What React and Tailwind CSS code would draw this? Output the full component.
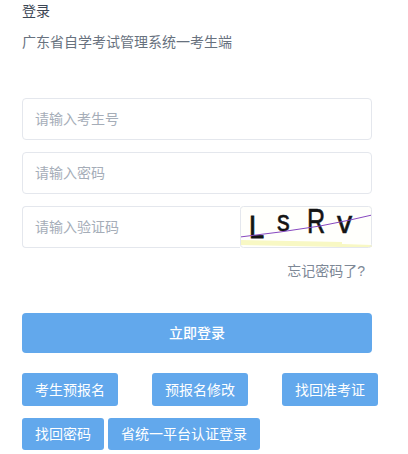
const font = { fontFamily: '"Liberation Sans", "Noto Sans CJK SC", sans-serif' };

function Field({ placeholder, className = "" }) {
  return (
    <div className={`h-[42px] border border-[#e4e7ed] flex items-center pl-3 text-sm text-[#a5adb8] ${className}`}>
      {placeholder}
    </div>
  );
}

function Small({ children, className = "" }) {
  return (
    <div className={`bg-[#62a8ec] text-white text-sm rounded-[3px] flex items-center justify-center ${className}`}>
      {children}
    </div>
  );
}

function Letter({ x, y, size, sx, sw = 0.5, children }) {
  return (
    <text transform={`translate(${x} ${y}) scale(${sx} 1)`} fontSize={size} fill="#141414" stroke="#141414" strokeWidth={sw} style={font}>
      {children}
    </text>
  );
}

export default function App() {
  return (
    <div className="w-[408px] h-[454px] bg-white overflow-hidden pl-[22px] font-['Liberation_Sans','Noto_Sans_CJK_SC',sans-serif]">
      <div className="h-[22px] text-sm leading-[22px] text-[#3c4654]">登录</div>
      <div className="mt-[9px] h-[22px] text-sm leading-[22px] text-[#67717e]">广东省自学考试管理系统一考生端</div>

      <div className="w-[350px] mt-[45px] flex flex-col gap-3">
        <Field placeholder="请输入考生号" className="rounded" />
        <Field placeholder="请输入密码" className="rounded" />
        <div className="flex h-[42px]">
          <Field placeholder="请输入验证码" className="w-[218px] rounded-l border-r-0" />
          <svg width="132" height="42" viewBox="0 0 132 42" className="block overflow-visible">
            <rect width="132" height="42" fill="#fffffc" />
            <path d="M0 34 L102 36 L102 38 L132 39 V41 L102 41 L0 39 Z" fill="#f8f8c4" />
            <Letter x={9} y={32} size={32} sx={0.85} sw={0.9}>L</Letter>
            <Letter x={37} y={25} size={30} sx={0.85} sw={0.6}>s</Letter>
            <Letter x={67} y={27} size={35} sx={0.72} sw={0.6}>R</Letter>
            <Letter x={97} y={27} size={32} sx={0.95} sw={0.6}>v</Letter>
            <path d="M0 31 L40 26 L80 20 L110 14 L132 9" stroke="#8748c0" strokeWidth="1" fill="none" />
            <rect x="0.5" y="0.5" width="131" height="41" rx="3" fill="none" stroke="#e4e7ed" />
          </svg>
        </div>
      </div>

      <div className="w-[343px] mt-[12px] h-[22px] text-sm leading-[22px] text-[#7d8896] text-right">忘记密码了?</div>

      <div className="w-[350px] h-[40px] mt-[31px] bg-[#62a8ec] text-white text-sm font-medium rounded flex items-center justify-center">立即登录</div>

      <div className="w-[356px] mt-[20px] flex justify-between">
        <Small className="w-[96px] h-[33px]">考生预报名</Small>
        <Small className="w-[96px] h-[33px]">预报名修改</Small>
        <Small className="w-[96px] h-[33px]">找回准考证</Small>
      </div>
      <div className="mt-[12px] flex gap-1">
        <Small className="w-[82px] h-[32px]">找回密码</Small>
        <Small className="w-[152px] h-[32px]">省统一平台认证登录</Small>
      </div>
    </div>
  );
}
